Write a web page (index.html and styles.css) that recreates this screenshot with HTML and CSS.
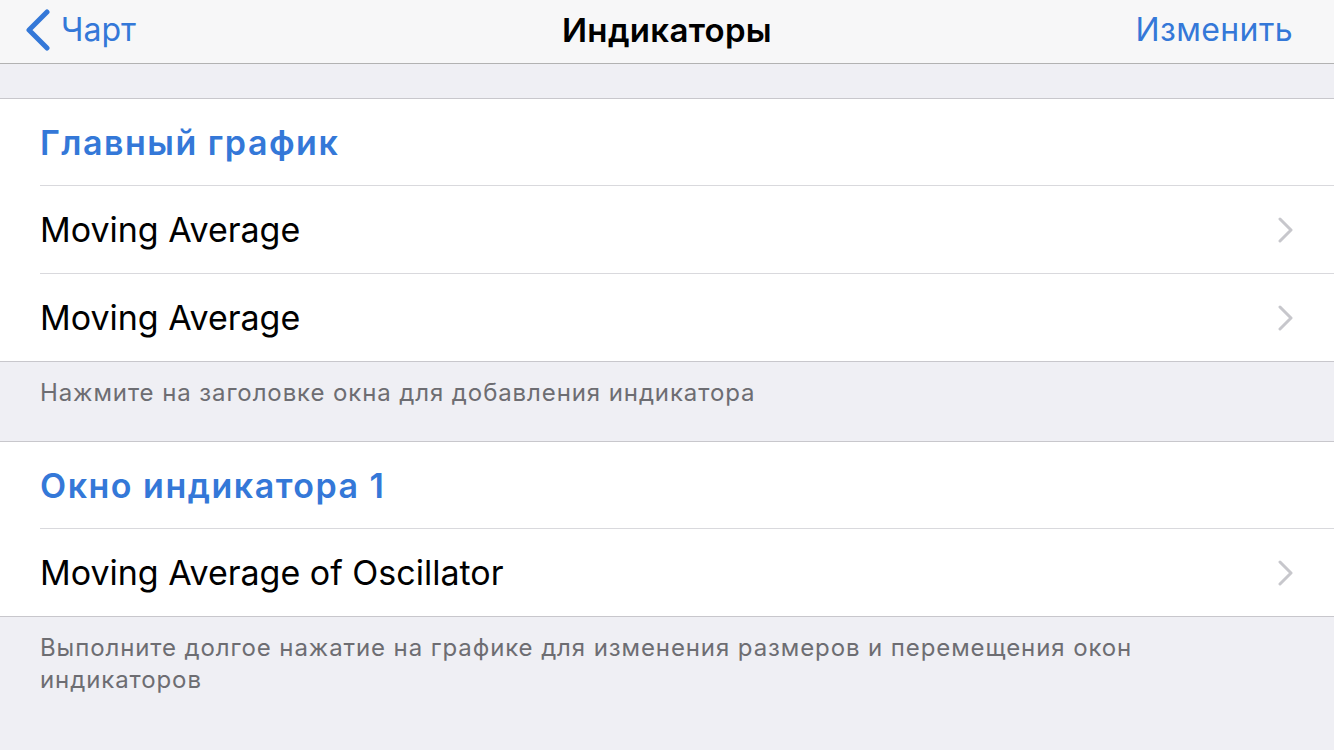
FILE: index.html
```html
<!DOCTYPE html>
<html>
  <head>
    <meta charset="utf-8">
    <title>Индикаторы</title>
    <link rel="stylesheet" href="styles.css">
  </head>
  <body>
    <header class="navbar">
      <a class="nav-back" href="#">
        <svg class="back-icon" width="28" height="42" viewBox="0 0 28 42">
          <path d="M24 3 L6 21 L24 39" fill="none" stroke="#3478d8" stroke-width="5" stroke-linecap="round" stroke-linejoin="round"/>
        </svg>
        <span>Чарт</span>
      </a>
      <div class="nav-title">Индикаторы</div>
      <a class="nav-action" href="#">Изменить</a>
    </header>

    <div class="spacer"></div>

    <section class="group">
      <div class="group-header">Главный график</div>
      <div class="row">
        <span>Moving Average</span>
        <svg class="chevron" width="16" height="26" viewBox="0 0 16 26">
          <path d="M2 2 L13 13 L2 24" fill="none" stroke="#c7c7cc" stroke-width="3" stroke-linecap="round" stroke-linejoin="round"/>
        </svg>
      </div>
      <div class="row">
        <span>Moving Average</span>
        <svg class="chevron" width="16" height="26" viewBox="0 0 16 26">
          <path d="M2 2 L13 13 L2 24" fill="none" stroke="#c7c7cc" stroke-width="3" stroke-linecap="round" stroke-linejoin="round"/>
        </svg>
      </div>
    </section>
    <p class="group-footer">Нажмите на заголовке окна для добавления индикатора</p>

    <section class="group">
      <div class="group-header">Окно индикатора 1</div>
      <div class="row">
        <span>Moving Average of Oscillator</span>
        <svg class="chevron" width="16" height="26" viewBox="0 0 16 26">
          <path d="M2 2 L13 13 L2 24" fill="none" stroke="#c7c7cc" stroke-width="3" stroke-linecap="round" stroke-linejoin="round"/>
        </svg>
      </div>
    </section>
    <p class="group-footer">Выполните долгое нажатие на графике для изменения размеров и перемещения окон индикаторов</p>
  </body>
</html>
```

FILE: styles.css
```css
body {
  margin: 0;
  background-color: #efeff4;
  font-family: Inter, "Noto Sans", sans-serif;
  color: #000;
}

a {
  text-decoration: none;
  color: #3478d8;
}

.navbar {
  height: 64px;
  box-sizing: border-box;
  background-color: #f7f7f8;
  border-bottom: 1px solid #b2b2b2;
  display: flex;
  align-items: center;
  justify-content: space-between;
  padding: 0 41px 4px 23px;
  font-size: 32px;
  position: relative;
}

.nav-back {
  display: flex;
  align-items: center;
  gap: 10px;
}

.nav-action {
  letter-spacing: 0.4px;
}

.nav-title {
  position: absolute;
  left: 0;
  right: 0;
  text-align: center;
  font-size: 33px;
  font-weight: 600;
  letter-spacing: 0.3px;
  pointer-events: none;
}

.spacer {
  height: 34px;
}

.group {
  background-color: #fff;
  border-top: 1px solid #c8c7cc;
  border-bottom: 1px solid #c8c7cc;
  padding-left: 40px;
}

.group-header {
  height: 86px;
  display: flex;
  align-items: center;
  color: #3478d8;
  font-size: 34px;
  font-weight: 600;
  letter-spacing: 1.5px;
  border-bottom: 1px solid #d9d9dd;
}

.row {
  height: 87px;
  display: flex;
  align-items: center;
  justify-content: space-between;
  padding-right: 40px;
  font-size: 34px;
  border-bottom: 1px solid #d9d9dd;
}

.row:last-child {
  border-bottom: none;
}

.chevron {
  display: block;
}

.group-footer {
  margin: 0;
  padding: 15px 180px 32px 40px;
  font-size: 24px;
  letter-spacing: 0.9px;
  line-height: 32px;
  color: #6d6d72;
}
```
